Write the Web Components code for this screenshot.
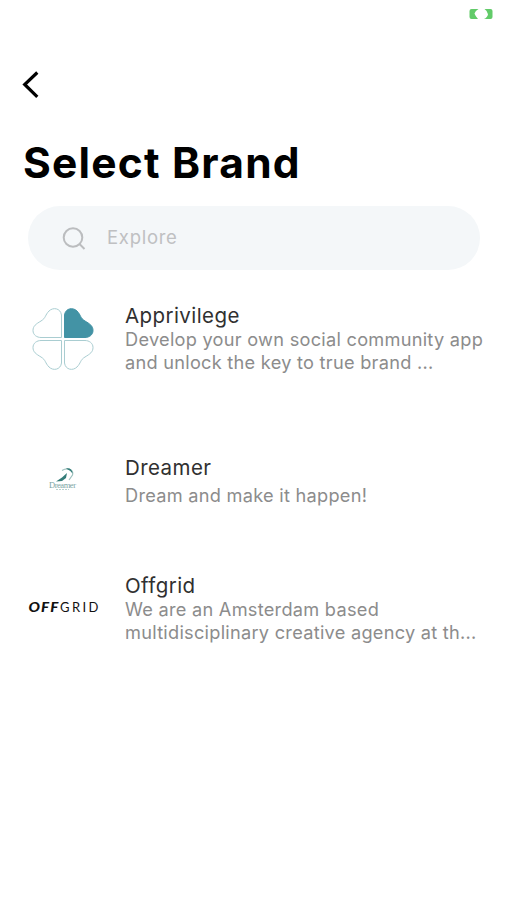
<!DOCTYPE html>
<html lang="en"><head><meta charset="utf-8"><title>Select Brand</title>
<style>body{margin:0;background:#fff;font-family:Inter,"Liberation Sans",sans-serif}</style></head>
<body><brand-screen></brand-screen>
<script>
const define=(name,html)=>customElements.define(name,class extends HTMLElement{
  constructor(){super();this.attachShadow({mode:'open'}).innerHTML=html;}
});
define('status-battery',`<style>:host{display:flex;justify-content:flex-end;height:62px;padding:9px 13px 0 0;box-sizing:border-box}svg{display:block}</style>
<svg width="25" height="10" viewBox="0 0 25 10" fill="#62cb69"><path d="M2.500 0H9.500Q6 2 5.500 4.500 6.500 7.500 9 10H2.500Q.5 10 .5 8V2Q.5 0 2.500 0ZM15.500 0H21.500Q23.500 0 23.500 2V8Q23.500 10 21.500 10H15Q18.500 8.500 19 5.200 18.500 2 15.500 0Z"/></svg>`);
define('back-button',`<style>:host{display:block;height:74px;padding:8px 0 0 20px;box-sizing:border-box}svg{display:block}</style>
<svg width="22" height="30" viewBox="0 0 22 30" fill="none" stroke="#000" stroke-width="3.200"><path d="M17.300 2.500 4.700 14.500 17.300 26.800"/></svg>`);
define('page-title',`<style>:host{display:block;height:70px;padding:1px 0 0 23px;font-weight:650;font-size:42.500px;line-height:52px;letter-spacing:1.200px;color:#000;white-space:nowrap;box-sizing:border-box}</style><slot></slot>`);
define('search-field',`<style>:host{display:flex;align-items:center;height:64px;margin:0 27px 0 28px;padding:0 0 2px 34px;border-radius:32px;background:#f4f7f9;box-sizing:border-box;color:#bfc0c2;font-size:18.500px;letter-spacing:.72px}svg{margin:2px 20px 0 0}</style>
<svg width="25" height="25" viewBox="0 0 25 25" fill="none" stroke="#bbbdbf" stroke-width="2"><circle cx="11" cy="11.500" r="9.300"/><path d="m17.500 18 5 5"/></svg><slot></slot>`);
define('brand-row',`<style>:host{display:grid;grid-template-columns:70px 1fr;column-gap:27px;padding-left:28px;box-sizing:border-box;align-items:start}
.logo{display:flex;justify-content:center;padding-top:var(--logo-top,0)}
.name{font-size:20.500px;line-height:26px;letter-spacing:.42px;color:#303030}
.desc{font-size:18.200px;line-height:23px;letter-spacing:.26px;color:#8c8c8c;white-space:nowrap;margin-top:var(--desc-gap,0)}</style>
<div class="logo"><slot name="logo"></slot></div><div><div class="name"><slot name="name"></slot></div><div class="desc"><slot></slot></div></div>`);
define('clover-logo',`<style>:host{display:block}svg{display:block}</style>
<svg width="62" height="62" viewBox="0 0 62 62" fill="none" stroke="#a9cdd1" stroke-width="1"><defs><path id="p" d="M32.500 29.500V7C33.500 0 41 -1 45 3C49 7 48 10 53 13C58 16 61 18 61 22.500C61 27 57 29.500 53 29.500Z"/></defs>
<use href="#p" fill="#4393a5" stroke="#4393a5"/><use href="#p" transform="matrix(-1 0 0 1 62 0)"/><use href="#p" transform="matrix(1 0 0 -1 0 62)"/><use href="#p" transform="rotate(180 31 31)"/></svg>`);
define('dreamer-logo',`<style>:host{display:block}svg{display:block}text{font-family:"Liberation Serif",serif}</style>
<svg width="30" height="26" viewBox="0 0 30 26"><path d="M14 3.500C20 0 26 3 24.500 8L21 13" fill="none" stroke="#9dc0bd" stroke-width="1.200"/><path d="M18 1.500q6-1 6.500 5-2-3-6.500-5M8 14.500l6-4 5-4.500-1 5-4 3z" fill="#347c79"/><text x="1" y="20.500" font-size="8.500" textLength="27" fill="#7ca6a5">Dreamer</text><path d="M8 22.500h13" stroke="#b9d1cf" stroke-width="1" stroke-dasharray="2 1"/></svg>`);
define('offgrid-logo',`<style>:host{display:block}svg{display:block}text{font-family:Lato,sans-serif;font-size:13px;fill:#111}</style>
<svg width="72" height="14" viewBox="0 0 72 14"><text x="1.500" y="11.500" textLength="31" lengthAdjust="spacingAndGlyphs" font-weight="900" font-style="italic" letter-spacing="1">OFF</text><text x="33" y="11.500" textLength="38.500">GRID</text></svg>`);
define('brand-screen',`<style>:host{display:block}search-field{margin-bottom:33px}brand-row{height:var(--h)}</style>
<status-battery></status-battery><back-button></back-button><page-title>Select Brand</page-title><search-field>Explore</search-field>
<brand-row style="--h:152px;--logo-top:5px;--desc-gap:-1px"><clover-logo slot="logo"></clover-logo><span slot="name">Apprivilege</span>Develop your own social community app<br>and unlock the key to true brand ...</brand-row>
<brand-row style="--h:118px;--logo-top:12px;--desc-gap:3px"><dreamer-logo slot="logo"></dreamer-logo><span slot="name">Dreamer</span>Dream and make it happen!</brand-row>
<brand-row style="--h:90px;--logo-top:27px;--desc-gap:-1px"><offgrid-logo slot="logo"></offgrid-logo><span slot="name">Offgrid</span>We are an Amsterdam based<br>multidisciplinary creative agency at th...</brand-row>`);
</script></body></html>
